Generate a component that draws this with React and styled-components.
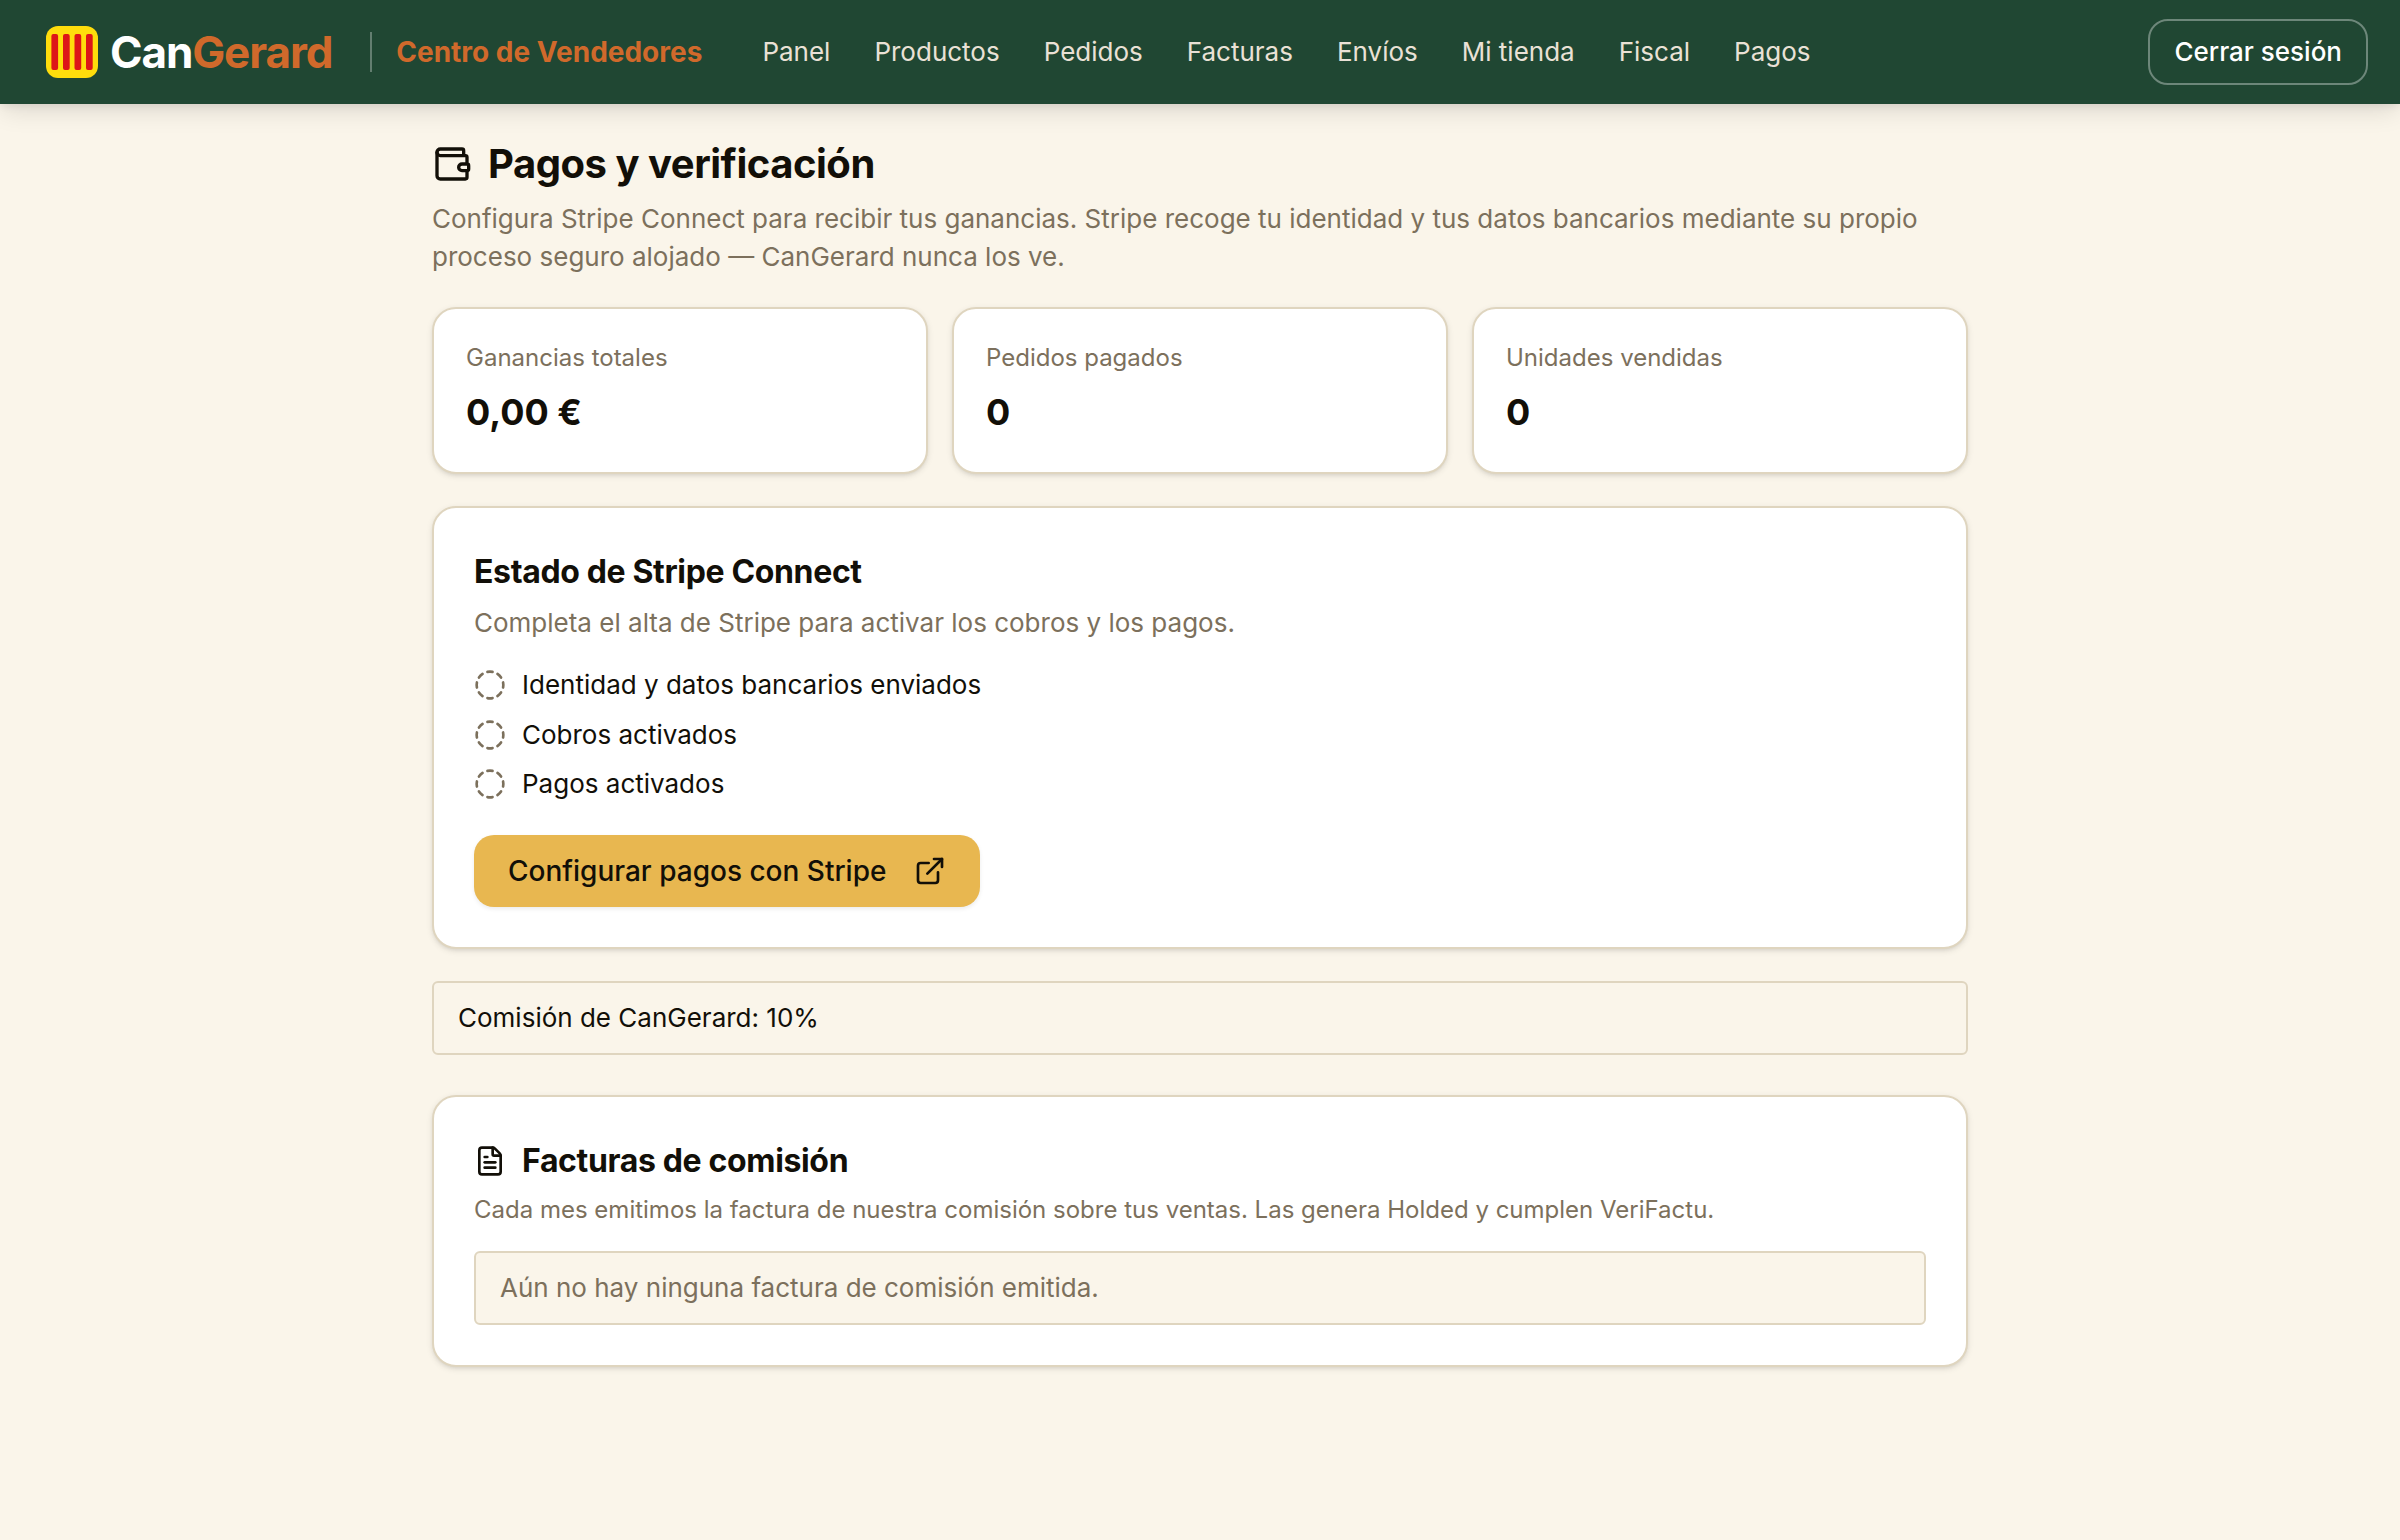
import React from 'react';
import styled, { createGlobalStyle } from 'styled-components';
import { CircleDashed, ExternalLink, FileText, Wallet } from 'lucide-react';

const GlobalStyle = createGlobalStyle`
  * {
    box-sizing: border-box;
  }

  body {
    margin: 0;
    min-height: 100vh;
    background: #faf5ea;
    color: #120f08;
    font-family: Inter, 'Liberation Sans', sans-serif;
    font-size: 26px;
    line-height: 38px;
    -webkit-font-smoothing: antialiased;
  }
`;

const Header = styled.header`
  position: relative;
  display: flex;
  align-items: center;
  height: 104px;
  padding: 0 32px 0 46px;
  background: #204733;
  box-shadow: 0 8px 24px -2px rgba(0, 0, 0, 0.12), 0 4px 8px -2px rgba(0, 0, 0, 0.08);
`;

const Brand = styled.a`
  display: flex;
  align-items: center;
  gap: 12px;
  color: #fff;
  font-size: 44px;
  font-weight: 700;
  letter-spacing: -0.025em;
`;

const BrandAccent = styled.span`
  color: #d0692b;
`;

const Divider = styled.span`
  width: 2px;
  height: 40px;
  margin: 0 24px 0 38px;
  background: rgba(255, 255, 255, 0.3);
`;

const Area = styled.span`
  color: #d0692b;
  font-size: 28px;
  font-weight: 700;
`;

const Nav = styled.nav`
  display: flex;
  gap: 44px;
  margin-left: 60px;
`;

const NavLink = styled.a`
  color: #eae1d6;
`;

const LogoutButton = styled.button`
  height: 66px;
  margin-left: auto;
  padding: 0 24px;
  border: 2px solid rgba(255, 255, 255, 0.35);
  border-radius: 20px;
  background: transparent;
  color: #fff;
  font: inherit;
  font-weight: 500;
`;

const Main = styled.main`
  width: 1536px;
  margin: 0 auto;
  padding-top: 36px;
`;

const PageTitle = styled.h1`
  display: flex;
  align-items: center;
  gap: 16px;
  margin: 0 0 12px;
  font-size: 40px;
  line-height: 48px;
  letter-spacing: -0.012em;
`;

const Text = styled.p`
  margin: 0;
  color: #7c705c;
`;

const Stats = styled.section`
  display: grid;
  grid-template-columns: repeat(3, 1fr);
  gap: 24px;
  margin: 31px 0 32px;
`;

const Card = styled.section`
  padding: 40px;
  border: 2px solid #dfd5bf;
  border-radius: 24px;
  background: #fff;
  box-shadow: 0 2px 6px rgba(0, 0, 0, 0.1), 0 2px 4px -2px rgba(0, 0, 0, 0.1);
`;

const StatCard = styled(Card)`
  height: 167px;
  padding: 32px;
`;

const StatLabel = styled.div`
  margin-bottom: 11px;
  color: #7c705c;
  font-size: 24px;
  line-height: 34px;
`;

const StatValue = styled.div`
  font-size: 36px;
  font-weight: 700;
  line-height: 52px;
`;

const CardTitle = styled.h2`
  display: flex;
  align-items: center;
  gap: 16px;
  margin: 0 0 ${props => props.$space || 8}px;
  font-size: 32px;
  line-height: 48px;
  letter-spacing: -0.011em;
`;

const SmallText = styled(Text)`
  margin-bottom: 24px;
  font-size: 24px;
  line-height: 35px;
`;

const Steps = styled.ul`
  display: flex;
  flex-direction: column;
  gap: 11.5px;
  margin: 24px 0 32px;
  padding: 0;
  list-style: none;
`;

const Step = styled.li`
  display: flex;
  align-items: center;
  gap: 16px;

  svg {
    color: #7c705c;
  }
`;

const StripeButton = styled.button`
  display: flex;
  align-items: center;
  justify-content: space-between;
  width: 506px;
  height: 72px;
  padding: 0 34px;
  border: 0;
  border-radius: 20px;
  background: #e8b750;
  color: #120f08;
  font: inherit;
  font-size: 28px;
  font-weight: 500;
  box-shadow: 0 2px 4px rgba(0, 0, 0, 0.08);
`;

const Notice = styled.div`
  padding: 16px 24px;
  border: 2px solid #dfd5bf;
  border-radius: 6px;
  background: #faf5ea;
  color: ${props => (props.$muted ? '#7c705c' : 'inherit')};
`;

const Fee = styled(Notice)`
  margin: 32px 0 40px;
`;

const Logo = () => (
  <svg width="52" height="52" viewBox="0 0 52 52">
    <rect width="52" height="52" rx="12" fill="#ffdd0c" />
    {[5.4, 17, 28.5, 40].map(x => (
      <rect key={x} x={x} y="8" width="6.7" height="36" rx="2" fill="#dd1518" />
    ))}
  </svg>
);

const links = ['Panel', 'Productos', 'Pedidos', 'Facturas', 'Envíos', 'Mi tienda', 'Fiscal', 'Pagos'];

const stats = [
  { label: 'Ganancias totales', value: '0,00 €' },
  { label: 'Pedidos pagados', value: '0' },
  { label: 'Unidades vendidas', value: '0' },
];

const steps = ['Identidad y datos bancarios enviados', 'Cobros activados', 'Pagos activados'];

const App = () => {
  return (
    <>
      <GlobalStyle />
      <Header>
        <Brand>
          <Logo />
          <span>Can<BrandAccent>Gerard</BrandAccent></span>
        </Brand>
        <Divider />
        <Area>Centro de Vendedores</Area>
        <Nav>
          {links.map(link => <NavLink key={link}>{link}</NavLink>)}
        </Nav>
        <LogoutButton>Cerrar sesión</LogoutButton>
      </Header>
      <Main>
        <PageTitle>
          <Wallet size={40} />
          Pagos y verificación
        </PageTitle>
        <Text>
          Configura Stripe Connect para recibir tus ganancias. Stripe recoge tu identidad y tus datos
          bancarios mediante su propio proceso seguro alojado — CanGerard nunca los ve.
        </Text>
        <Stats>
          {stats.map(({ label, value }) => (
            <StatCard key={label} as="div">
              <StatLabel>{label}</StatLabel>
              <StatValue>{value}</StatValue>
            </StatCard>
          ))}
        </Stats>
        <Card>
          <CardTitle>Estado de Stripe Connect</CardTitle>
          <Text>Completa el alta de Stripe para activar los cobros y los pagos.</Text>
          <Steps>
            {steps.map(step => (
              <Step key={step}>
                <CircleDashed size={32} />
                {step}
              </Step>
            ))}
          </Steps>
          <StripeButton>
            Configurar pagos con Stripe
            <ExternalLink size={32} />
          </StripeButton>
        </Card>
        <Fee>Comisión de CanGerard: 10%</Fee>
        <Card>
          <CardTitle $space={7}>
            <FileText size={32} />
            Facturas de comisión
          </CardTitle>
          <SmallText>
            Cada mes emitimos la factura de nuestra comisión sobre tus ventas. Las genera Holded y cumplen VeriFactu.
          </SmallText>
          <Notice $muted>Aún no hay ninguna factura de comisión emitida.</Notice>
        </Card>
      </Main>
    </>
  );
};

export default App;
